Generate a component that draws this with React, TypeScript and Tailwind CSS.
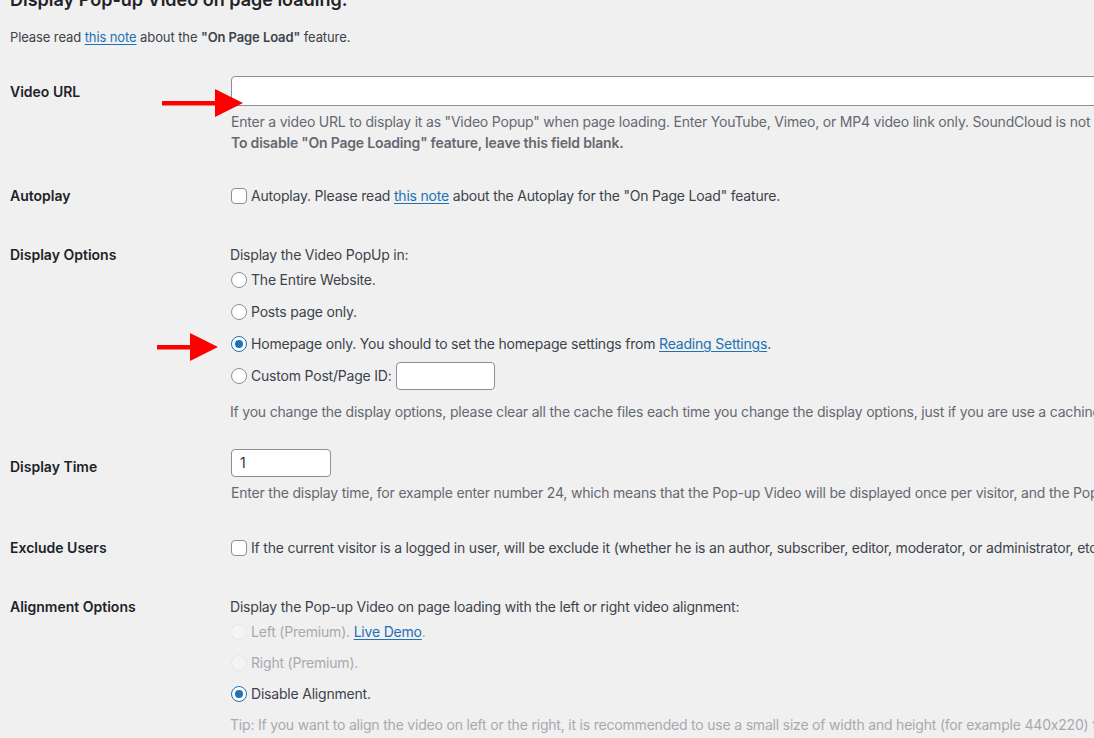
import React from "react";

const font = "font-['Inter','Liberation_Sans',sans-serif]";

function Checkbox() {
  return (
    <span className="inline-block h-4 w-4 shrink-0 rounded-[4px] border border-[#8c8f94] bg-white" />
  );
}

function Radio({ checked = false, disabled = false }: { checked?: boolean; disabled?: boolean }) {
  if (disabled) {
    return <span className="inline-block h-4 w-4 shrink-0 rounded-full border border-[#e6e6e8] bg-[#f4f4f5]" />;
  }
  return (
    <span
      className={`flex h-4 w-4 shrink-0 items-center justify-center rounded-full border bg-white ${
        checked ? "border-[#2271b1]" : "border-[#8c8f94]"
      }`}
    >
      {checked && <span className="h-2 w-2 rounded-full bg-[#2271b1]" />}
    </span>
  );
}

function Link({ children }: { children: React.ReactNode }) {
  return <span className="text-[#2271b1] underline underline-offset-2">{children}</span>;
}

// red annotation arrow, tip at (x, y), tail starting at x0
function Arrow({ x, y, x0 }: { x: number; y: number; x0: number }) {
  const w = x - x0;
  return (
    <svg
      className="pointer-events-none absolute"
      style={{ left: x0, top: y - 14 }}
      width={w}
      height="28"
      viewBox={`0 0 ${w} 28`}
    >
      <rect x="0" y="12" width={w - 26} height="4.5" fill="#ff0000" />
      <polygon points={`${w - 28},0 ${w},14 ${w - 28},28`} fill="#ff0000" />
    </svg>
  );
}

export default function App() {
  return (
    <div className={`relative h-[738px] w-full overflow-hidden bg-[#f0f0f1] pl-[10px] text-[14px] leading-5 tracking-[-0.2px] text-[#3c434a] ${font}`}>
      {/* heading */}
      <h2 className="mt-[-12px] whitespace-nowrap text-[18px] font-semibold leading-6 tracking-normal text-[#1d2327]">
        Display Pop-up Video on page loading.
      </h2>
      <p className="mt-[15px] whitespace-nowrap text-[13px] leading-5 tracking-[-0.1px]">
        Please read <Link>this note</Link> about the <b className="font-semibold">"On Page Load"</b> feature.
      </p>

      {/* Video URL */}
      <div className="mt-[29px] flex">
        <div className="w-[220px] shrink-0 pt-[6px] font-semibold tracking-normal text-[#1d2327]">Video URL</div>
        <div className="min-w-0 flex-1 whitespace-nowrap pl-[1px]">
          <div className="h-[30px] w-[1000px] rounded-[4px] border border-[#8c8f94] bg-white" />
          <p className="mt-[5px] leading-[21px] text-[#646970]">
            Enter a video URL to display it as "Video Popup" when page loading. Enter YouTube, Vimeo, or MP4 video link only. SoundCloud is not supported.
          </p>
          <p className="font-semibold leading-[21px] text-[#646970]">
            To disable "On Page Loading" feature, leave this field blank.
          </p>
        </div>
      </div>

      {/* Autoplay */}
      <div className="mt-[33px] flex">
        <div className="w-[220px] shrink-0 font-semibold tracking-normal text-[#1d2327]">Autoplay</div>
        <div className="flex min-w-0 flex-1 items-center gap-[4px] whitespace-nowrap pl-[1px]">
          <Checkbox />
          <span>
            Autoplay. Please read <Link>this note</Link> about the Autoplay for the "On Page Load" feature.
          </span>
        </div>
      </div>

      {/* Display Options */}
      <div className="mt-[39px] flex">
        <div className="w-[220px] shrink-0 font-semibold tracking-normal text-[#1d2327]">Display Options</div>
        <div className="min-w-0 flex-1 whitespace-nowrap">
          <p>Display the Video PopUp in:</p>
          <div className="mt-[-1px] flex flex-col">
            <label className="flex h-8 items-center gap-[4px] pl-[1px]">
              <Radio /> <span>The Entire Website.</span>
            </label>
            <label className="flex h-8 items-center gap-[4px] pl-[1px]">
              <Radio /> <span>Posts page only.</span>
            </label>
            <label className="flex h-8 items-center gap-[4px] pl-[1px]">
              <Radio checked />
              <span>
                Homepage only. You should to set the homepage settings from <Link>Reading Settings</Link>.
              </span>
            </label>
            <label className="flex h-8 items-center gap-[4px] pl-[1px]">
              <Radio /> <span>Custom Post/Page ID:</span>
              <span className="h-[28px] w-[99px] rounded-[4px] border border-[#8c8f94] bg-white" />
            </label>
          </div>
          <p className="mt-[10px] text-[#646970]">
            If you change the display options, please clear all the cache files each time you change the display options, just if you are use a caching plugin.
          </p>
        </div>
      </div>

      {/* Display Time */}
      <div className="mt-[27px] flex">
        <div className="w-[220px] shrink-0 pt-[8px] font-semibold tracking-normal text-[#1d2327]">Display Time</div>
        <div className="min-w-0 flex-1 whitespace-nowrap pl-[1px]">
          <div className="flex h-[28px] w-[100px] items-center rounded-[4px] border border-[#8c8f94] bg-white px-[8px] text-[#2c3338]">
            1
          </div>
          <p className="mt-[6px] text-[#646970]">
            Enter the display time, for example enter number 24, which means that the Pop-up Video will be displayed once per visitor, and the Pop-up Video will be displayed again after 24 hours.
          </p>
        </div>
      </div>

      {/* Exclude Users */}
      <div className="mt-[35px] flex">
        <div className="w-[220px] shrink-0 font-semibold tracking-normal text-[#1d2327]">Exclude Users</div>
        <div className="flex min-w-0 flex-1 items-center gap-[4px] whitespace-nowrap pl-[1px]">
          <Checkbox />
          <span>
            If the current visitor is a logged in user, will be exclude it (whether he is an author, subscriber, editor, moderator, or administrator, etc.).
          </span>
        </div>
      </div>

      {/* Alignment Options */}
      <div className="mt-[39px] flex">
        <div className="w-[220px] shrink-0 font-semibold tracking-normal text-[#1d2327]">Alignment Options</div>
        <div className="min-w-0 flex-1 whitespace-nowrap">
          <p>Display the Pop-up Video on page loading with the left or right video alignment:</p>
          <div className="mt-[-1px] flex flex-col">
            <label className="flex h-[31px] items-center gap-[4px] pl-[1px] text-[#a7aaad]">
              <Radio disabled />
              <span>
                Left (Premium). <Link>Live Demo</Link>.
              </span>
            </label>
            <label className="flex h-[31px] items-center gap-[4px] pl-[1px] text-[#a7aaad]">
              <Radio disabled /> <span>Right (Premium).</span>
            </label>
            <label className="flex h-[31px] items-center gap-[4px] pl-[1px]">
              <Radio checked /> <span>Disable Alignment.</span>
            </label>
          </div>
          <p className="mt-[6px] text-[#a7aaad]">
            Tip: If you want to align the video on left or the right, it is recommended to use a small size of width and height (for example 440x220) for a better look.
          </p>
        </div>
      </div>

      {/* annotation arrows */}
      <Arrow x0={162} x={243} y={103} />
      <Arrow x0={157} x={218} y={347} />
    </div>
  );
}
